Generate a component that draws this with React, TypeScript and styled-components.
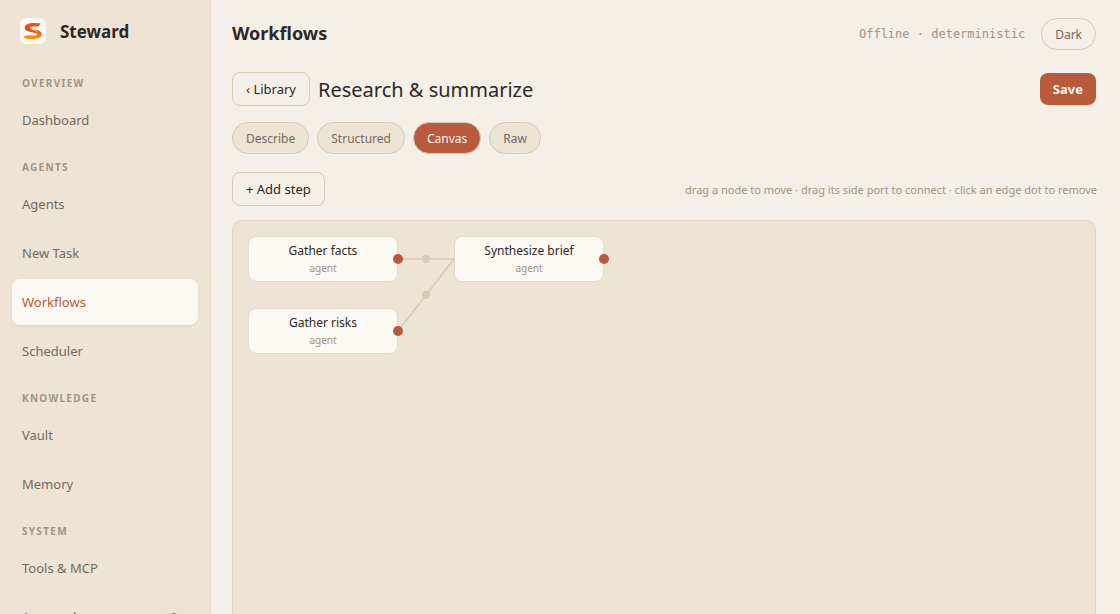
import React from "react";
import styled, { createGlobalStyle } from "styled-components";

const Global = createGlobalStyle`
  *, *::before, *::after { box-sizing: border-box; }
  body {
    margin: 0;
    height: 614px;
    overflow: hidden;
    background: #f4efe7;
    color: #2d2926;
    font: 13px/1.5 "Noto Sans", sans-serif;
  }
  button { font: inherit; color: inherit; margin: 0; }
`;

const Shell = styled.div`
  display: grid;
  grid-template-columns: 211px 1fr;
  height: 614px;
  overflow: hidden;
`;

const Sidebar = styled.aside`
  display: flex;
  flex-direction: column;
  padding: 18px 12px 0;
  background: #ede4d3;
  border-right: 1px solid #e2d8c5;
  overflow: hidden;
`;

const Brand = styled.div`
  display: flex;
  flex: none;
  align-items: center;
  gap: 14px;
  height: 26px;
  padding-left: 8px;
  margin-bottom: 29px;
`;

const BrandName = styled.span`
  padding-top: 2px;
  font-size: 17px;
  line-height: 26px;
  font-weight: 700;
`;

const Logo = styled.span`
  display: grid;
  place-items: center;
  width: 26px;
  height: 26px;
  border-radius: 6px;
  background: #fcfaf5;
`;

const Group = styled.div`
  display: flex;
  flex: none;
  flex-direction: column;
  gap: 3px;
  margin-bottom: 14px;
`;

const GroupLabel = styled.div`
  height: 21px;
  padding-left: 10px;
  font-size: 10px;
  line-height: 20px;
  font-weight: 700;
  letter-spacing: 1.3px;
  color: #a09484;
`;

const NavItem = styled.a<{ $active?: boolean }>`
  display: flex;
  align-items: center;
  justify-content: space-between;
  height: 46px;
  padding: 1px 10px 0;
  border-radius: 8px;
  color: ${(p) => (p.$active ? "#b85a3b" : "#736a5e")};
  background: ${(p) => (p.$active ? "#fcf9f2" : "transparent")};
  box-shadow: ${(p) => (p.$active ? "0 1px 2px rgba(80, 60, 30, 0.1)" : "none")};
`;

const Count = styled.span`
  width: 28px;
  height: 20px;
  margin-bottom: 2px;
  border-radius: 10px;
  background: #ece3d4;
  font-size: 11px;
  line-height: 20px;
  text-align: center;
`;

const Main = styled.main`
  display: flex;
  flex-direction: column;
  padding: 18px 24px 0 21px;
  min-width: 0;
`;

const TopBar = styled.header`
  display: flex;
  align-items: center;
  height: 32px;
`;

const PageTitle = styled.h1`
  margin: 0 auto 2px 0;
  font-size: 18px;
  line-height: 28px;
  font-weight: 700;
`;

const Status = styled.span`
  margin-right: 16px;
  font: 12px/18px "DejaVu Sans Mono", monospace;
  color: #a09484;
`;

const Pill = styled.button<{ $tone?: "plain" | "soft" | "active" }>`
  height: 32px;
  padding: 2px 13px 0;
  border: 1px solid #d6cab3;
  border-radius: 16px;
  font-size: 12px;
  background: ${(p) =>
    p.$tone === "active" ? "#b85a3b" : p.$tone === "soft" ? "#ede4d3" : "transparent"};
  color: ${(p) => (p.$tone === "active" ? "#fcf9f2" : "#736a5e")};
`;

const TitleRow = styled.div`
  display: flex;
  align-items: center;
  gap: 8px;
  height: 34px;
  margin-top: 22px;
`;

const FlowName = styled.h2`
  margin: 0 auto 0 0;
  padding-top: 2px;
  font-size: 20px;
  line-height: 30px;
  font-weight: 400;
`;

const OutlineButton = styled.button`
  height: 34px;
  padding: 1px 13px 0;
  border: 1px solid #d6cab3;
  border-radius: 8px;
  background: transparent;
  font-size: 13px;
`;

const SaveButton = styled.button`
  height: 32px;
  padding: 1px 13px 0;
  border: 0;
  border-radius: 8px;
  background: #b85a3b;
  color: #fcf9f2;
  font-size: 13px;
  font-weight: 700;
`;

const Tabs = styled.div`
  display: flex;
  gap: 8px;
  margin-top: 16px;
`;

const ToolRow = styled.div`
  display: flex;
  align-items: center;
  justify-content: space-between;
  margin: 18px -1px 14px 0;
`;

const Hint = styled.span`
  padding-top: 2px;
  font-size: 11px;
  color: #a09484;
`;

const Board = styled.section`
  position: relative;
  flex: none;
  height: 520px;
  border: 1px solid #e2d8c5;
  border-radius: 10px;
  background: #ede4d3;
`;

const Edges = styled.svg`
  position: absolute;
  inset: 0;
  width: 100%;
  height: 100%;
`;

const Node = styled.div<{ $x: number; $y: number }>`
  position: absolute;
  left: ${(p) => p.$x}px;
  top: ${(p) => p.$y}px;
  width: 150px;
  height: 46px;
  padding-top: 5px;
  border: 1px solid #e4dac8;
  border-radius: 8px;
  background: #fcf9f2;
  text-align: center;
`;

const NodeName = styled.div`
  font-size: 12px;
  line-height: 18px;
`;

const NodeKind = styled.div`
  font-size: 10px;
  line-height: 17px;
  color: #a09484;
`;

const Port = styled.span`
  position: absolute;
  right: -6px;
  top: 17px;
  width: 10px;
  height: 10px;
  border-radius: 50%;
  background: #b85a3b;
`;

const groups = [
  { label: "OVERVIEW", items: ["Dashboard"] },
  { label: "AGENTS", items: ["Agents", "New Task", "Workflows", "Scheduler"] },
  { label: "KNOWLEDGE", items: ["Vault", "Memory"] },
  { label: "SYSTEM", items: ["Tools & MCP", "Approvals"] },
];

const nodes = [
  { name: "Gather facts", x: 15, y: 15 },
  { name: "Gather risks", x: 15, y: 87 },
  { name: "Synthesize brief", x: 221, y: 15 },
];

export default function App() {
  return (
    <>
      <Global />
      <Shell>
        <Sidebar>
          <Brand>
            <Logo>
              <svg width="26" height="26" viewBox="0 0 26 26" fill="none">
                <defs>
                  <linearGradient id="mark" x1="0" y1="5" x2="0" y2="21" gradientUnits="userSpaceOnUse">
                    <stop stopColor="#ea5a1c" />
                    <stop offset=".45" stopColor="#e24a12" />
                    <stop offset=".7" stopColor="#f07c0a" />
                    <stop offset="1" stopColor="#f59a05" />
                  </linearGradient>
                </defs>
                <path
                  d="M20.6 5.2 18.8 8.4H12.4C10.4 8.4 9.6 9.4 11 10.2L18.6 12.4C22.8 13.8 22.6 18 19.8 19.6 18 20.7 16 21 14 21H8C5.6 21 4 20 3.8 18.6L6.2 17.4H14.6C17.2 17.4 17.8 15.8 15.8 15.2L8.6 13.4C3.4 12 3.6 7.6 7.6 5.9 9.4 5.1 11 5 13 5Z"
                  fill="url(#mark)"
                />
                <path d="M10.2 10.2C12 11.6 14.6 11.4 17.2 13.6" stroke="#fcfaf5" strokeWidth=".8" />
              </svg>
            </Logo>
            <BrandName>Steward</BrandName>
          </Brand>
          {groups.map((g) => (
            <Group key={g.label}>
              <GroupLabel>{g.label}</GroupLabel>
              {g.items.map((item) => (
                <NavItem key={item} $active={item === "Workflows"}>
                  {item}
                  {item === "Approvals" && <Count>2</Count>}
                </NavItem>
              ))}
            </Group>
          ))}
        </Sidebar>
        <Main>
          <TopBar>
            <PageTitle>Workflows</PageTitle>
            <Status>Offline · deterministic</Status>
            <Pill>Dark</Pill>
          </TopBar>
          <TitleRow>
            <OutlineButton>‹ Library</OutlineButton>
            <FlowName>Research &amp; summarize</FlowName>
            <SaveButton>Save</SaveButton>
          </TitleRow>
          <Tabs>
            <Pill $tone="soft">Describe</Pill>
            <Pill $tone="soft">Structured</Pill>
            <Pill $tone="active">Canvas</Pill>
            <Pill $tone="soft">Raw</Pill>
          </Tabs>
          <ToolRow>
            <OutlineButton>+ Add step</OutlineButton>
            <Hint>drag a node to move · drag its side port to connect · click an edge dot to remove</Hint>
          </ToolRow>
          <Board>
            <Edges>
              <g stroke="#d6cab3" strokeWidth="1.5">
                <line x1="165" y1="38" x2="221" y2="38" />
                <line x1="165" y1="110" x2="221" y2="38" />
              </g>
              <circle cx="193" cy="38" r="4" fill="#d6cab3" />
              <circle cx="193" cy="74" r="4" fill="#d6cab3" />
            </Edges>
            {nodes.map((n) => (
              <Node key={n.name} $x={n.x} $y={n.y}>
                <NodeName>{n.name}</NodeName>
                <NodeKind>agent</NodeKind>
                <Port />
              </Node>
            ))}
          </Board>
        </Main>
      </Shell>
    </>
  );
}
